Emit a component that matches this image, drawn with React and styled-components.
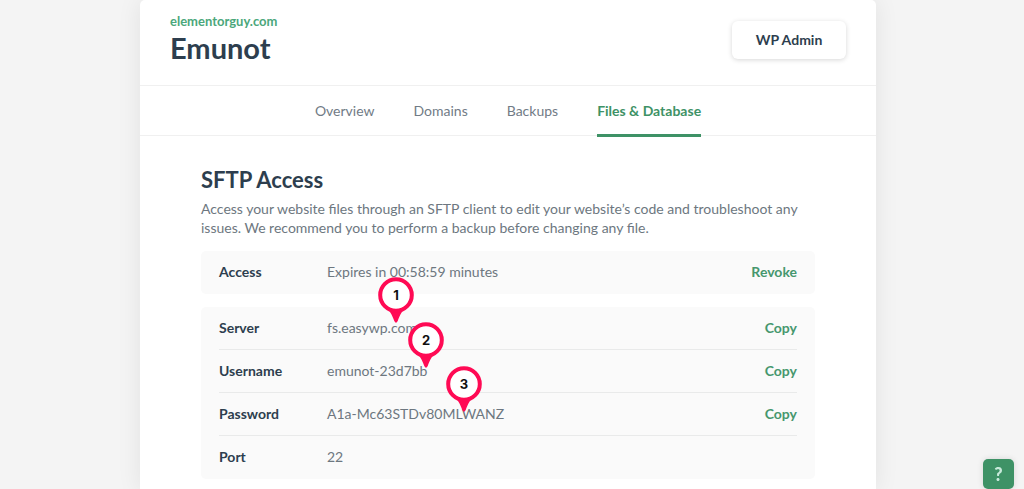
import React from 'react';
import styled, { createGlobalStyle } from 'styled-components';

const GlobalStyle = createGlobalStyle`
  * { box-sizing: border-box; }
  body {
    margin: 0;
    background: #f4f4f4;
    color: #6d7780;
    font-family: Lato, "Noto Sans", sans-serif;
    font-size: 14px;
    line-height: 19px;
  }
`;

const Page = styled.div`
  display: flex;
  min-height: 100vh;
  padding: 0 148px 0 140px;
`;

const Panel = styled.main`
  flex: 1;
  min-width: 0;
  background: #fff;
  border-radius: 5px 5px 0 0;
  box-shadow: 0 0 24px rgba(0, 0, 0, 0.08);
`;

const Header = styled.header`
  display: flex;
  align-items: center;
  justify-content: space-between;
  height: 86px;
  padding: 0 30px 6px;
  border-bottom: 1px solid #f0f0f0;
`;

const SiteLink = styled.a`
  display: block;
  color: #4ba77b;
  font-size: 13px;
  font-weight: 700;
  line-height: 16px;
  text-decoration: none;
`;

const SiteName = styled.h1`
  margin: 0;
  color: #2d3e4e;
  font-size: 29px;
  font-weight: 700;
  line-height: 38px;
`;

const AdminButton = styled.button`
  width: 114px;
  height: 38px;
  padding: 0;
  border: 0;
  border-radius: 6px;
  background: #fff;
  box-shadow: 0 1px 5px rgba(0, 0, 0, 0.16);
  color: #2d3e4e;
  font: inherit;
  font-weight: 700;
`;

const Tabs = styled.nav`
  display: flex;
  justify-content: center;
  gap: 39px;
  height: 50px;
  border-bottom: 1px solid #f0f0f0;
`;

const Tab = styled.a`
  height: 51px;
  border-bottom: 3px solid ${(p) => (p.$active ? '#3e9266' : 'transparent')};
  color: ${(p) => (p.$active ? '#3e9266' : '#717b86')};
  font-weight: ${(p) => (p.$active ? 700 : 400)};
  line-height: 50px;
  text-decoration: none;
  white-space: nowrap;
`;

const Section = styled.section`
  padding: 30px 61px 12px;
`;

const SectionTitle = styled.h2`
  margin: 0 0 6px;
  color: #2d3e4e;
  font-size: 22px;
  font-weight: 700;
  line-height: 27px;
`;

const Description = styled.p`
  margin: 0 0 14px;
`;

const Details = styled.div`
  position: relative;
  display: flex;
  flex-direction: column;
  gap: 13px;
`;

const Card = styled.dl`
  margin: 0;
  padding: 0 18px;
  border-radius: 5px;
  background: #fafafa;
`;

const Row = styled.div`
  display: flex;
  align-items: center;
  height: 43px;
  padding-bottom: 2px;
  border-bottom: 1px solid #e9eaea;
  &:last-child { border-bottom: 0; }
`;

const Label = styled.dt`
  width: 108px;
  color: #2d3e4e;
  font-weight: 700;
`;

const Value = styled.dd`
  flex: 1;
  margin: 0;
`;

const Action = styled.button`
  padding: 0;
  border: 0;
  background: none;
  color: #46976e;
  font: inherit;
  font-weight: 700;
`;

const Pin = styled.span`
  position: absolute;
  left: ${(p) => p.$x}px;
  top: ${(p) => p.$y}px;
  width: 36px;
  height: 46px;
  color: #111;
  font-family: Inter, sans-serif;
  font-size: 13px;
  font-weight: 700;
  line-height: 36px;
  text-align: center;
  svg { position: absolute; inset: 0; }
  b { position: relative; font-weight: inherit; }
`;

const HelpButton = styled.button`
  position: fixed;
  right: 10px;
  bottom: 0;
  width: 31px;
  height: 30px;
  padding: 0;
  border: 0;
  border-radius: 5px;
  background: #3e9266;
  box-shadow: 0 0 6px rgba(0, 0, 0, 0.12);
  color: #c9eadb;
  font: inherit;
  font-size: 18px;
  font-weight: 900;
`;

const tabs = ['Overview', 'Domains', 'Backups', 'Files & Database'];

const credentials = [
  { label: 'Server', value: 'fs.easywp.com', action: 'Copy' },
  { label: 'Username', value: 'emunot-23d7bb', action: 'Copy' },
  { label: 'Password', value: 'A1a-Mc63STDv80MLWANZ', action: 'Copy' },
  { label: 'Port', value: '22' },
];

const pins = [
  { x: 177, y: 26 },
  { x: 207, y: 71 },
  { x: 245, y: 115 },
];

function DetailRow({ label, value, action }) {
  return (
    <Row>
      <Label>{label}</Label>
      <Value>{value}</Value>
      {action && <Action type="button">{action}</Action>}
    </Row>
  );
}

function StepPin({ x, y, number }) {
  return (
    <Pin $x={x} $y={y}>
      <svg width="36" height="46" viewBox="0 0 36 46" aria-hidden="true">
        <path d="M7 30C12 33 14 38 16.300 44Q18 47.500 19.700 44C22 38 24 33 29 30Z" fill="#ff0a54" />
        <circle cx="18" cy="18" r="15.800" fill="#fff" stroke="#ff0a54" strokeWidth="4" />
      </svg>
      <b>{number}</b>
    </Pin>
  );
}

export default function App() {
  return (
    <>
      <GlobalStyle />
      <Page>
        <Panel>
          <Header>
            <div>
              <SiteLink href="#site">elementorguy.com</SiteLink>
              <SiteName>Emunot</SiteName>
            </div>
            <AdminButton type="button">WP Admin</AdminButton>
          </Header>
          <Tabs>
            {tabs.map((tab) => (
              <Tab key={tab} href="#tab" $active={tab === 'Files & Database'}>{tab}</Tab>
            ))}
          </Tabs>
          <Section>
            <SectionTitle>SFTP Access</SectionTitle>
            <Description>
              Access your website files through an SFTP client to edit your website’s code and
              troubleshoot any issues. We recommend you to perform a backup before changing any file.
            </Description>
            <Details>
              <Card>
                <DetailRow label="Access" value="Expires in 00:58:59 minutes" action="Revoke" />
              </Card>
              <Card>
                {credentials.map((item) => <DetailRow key={item.label} {...item} />)}
              </Card>
              {pins.map((pin, index) => <StepPin key={pin.x} {...pin} number={index + 1} />)}
            </Details>
          </Section>
        </Panel>
        <HelpButton type="button" aria-label="Help">?</HelpButton>
      </Page>
    </>
  );
}
